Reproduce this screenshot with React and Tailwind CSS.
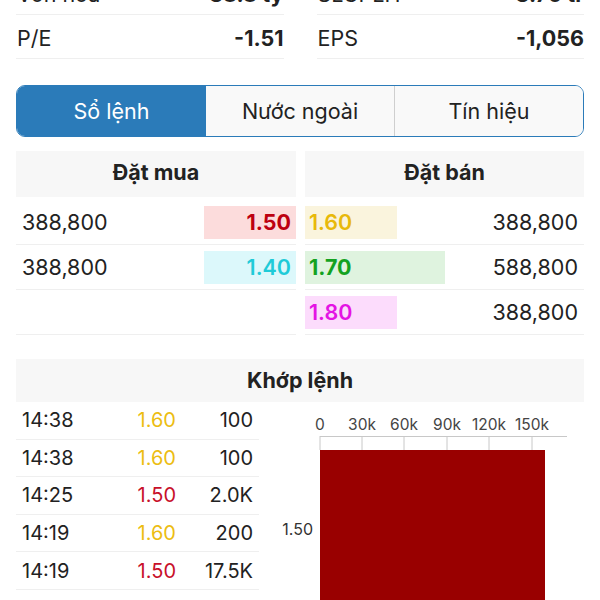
const stats = [
  [
    ['Vốn hóa', '38.8 tỷ'],
    ['SLCPLH', '3.70 tr'],
  ],
  [
    ['P/E', '-1.51'],
    ['EPS', '-1,056'],
  ],
];

const bids = [
  { vol: '388,800', price: '1.50', bg: 'bg-[#fcdcdc]', color: 'text-[#bd0010] font-bold' },
  { vol: '388,800', price: '1.40', bg: 'bg-[#dcf8fb]', color: 'text-[#1fcbd8] font-semibold' },
];

const asks = [
  { vol: '388,800', price: '1.60', w: 'w-[92px]', bg: 'bg-[#faf4dd]', color: 'text-[#e8b90a] font-semibold' },
  { vol: '588,800', price: '1.70', w: 'w-[140px]', bg: 'bg-[#dff3df]', color: 'text-[#13a21f] font-bold' },
  { vol: '388,800', price: '1.80', w: 'w-[92px]', bg: 'bg-[#fcdcfc]', color: 'text-[#e414e4] font-semibold' },
];

const trades = [
  ['14:38', '1.60', '100', 'text-[#ecbd12]'],
  ['14:38', '1.60', '100', 'text-[#ecbd12]'],
  ['14:25', '1.50', '2.0K', 'text-[#c8102a]'],
  ['14:19', '1.60', '200', 'text-[#ecbd12]'],
  ['14:19', '1.50', '17.5K', 'text-[#c8102a]'],
];

const ticks = [
  [61, '0'],
  [103, '30k'],
  [145, '60k'],
  [188, '90k'],
  [230, '120k'],
  [273, '150k'],
];

function VolumeChart() {
  return (
    <svg width="325" height="198" viewBox="0 0 325 198" className="block">
      {ticks.map(([x, t]) => (
        <g key={t}>
          <text x={x} y="28" textAnchor="middle" fontSize="15.5" fill="#444" fontFamily="Inter, sans-serif">
            {t}
          </text>
          <line x1={x} y1="34" x2={x} y2="48" stroke="#c8c8c8" strokeWidth="1" />
        </g>
      ))}
      <line x1="61" y1="34.5" x2="308" y2="34.5" stroke="#c8c8c8" strokeWidth="1" />
      <rect x="61" y="48" width="225" height="160" fill="#990000" />
      <text x="54" y="133" textAnchor="end" fontSize="16" fill="#333" fontFamily="Inter, sans-serif">
        1.50
      </text>
    </svg>
  );
}

export default function App() {
  return (
    <div className="h-[600px] w-[600px] overflow-hidden bg-white px-4 text-[#222] font-['Inter',sans-serif]">
      {/* Chỉ số cơ bản */}
      <div className="-mt-[29px] grid grid-cols-2 gap-x-[33px]">
        {stats.map((row) =>
          row.map(([label, value]) => (
            <div key={label} className="flex h-[44px] items-center justify-between border-b border-[#efefef] pl-[1px] pt-[3px] text-[21.5px]">
              <span>{label}</span>
              <span className="font-bold">{value}</span>
            </div>
          ))
        )}
      </div>

      {/* Tabs */}
      <div className="mt-[26px] flex h-[52px] overflow-hidden rounded-[9px] border border-[#2b7bb9] text-[21.5px]">
        <div className="flex w-[189px] items-center justify-center bg-[#2b7bb9] text-white">Sổ lệnh</div>
        <div className="flex w-[189px] items-center justify-center border-r border-[#cfcfcf] bg-[#f9f9f9]">Nước ngoài</div>
        <div className="flex flex-1 items-center justify-center bg-[#f9f9f9]">Tín hiệu</div>
      </div>

      {/* Sổ lệnh */}
      <div className="mt-[14px] grid grid-cols-[280px_1fr] gap-x-[9px] text-[21.5px]">
        <div>
          <div className="mb-[3px] flex h-[46px] items-center justify-center bg-[#f7f7f7] pb-[3px] font-bold">Đặt mua</div>
          {bids.map((b, i) => (
            <div key={i} className="flex h-[45px] items-center justify-between border-b border-[#efefef] pl-[6px]">
              <span>{b.vol}</span>
              <span className={`flex h-[33px] w-[92px] items-center justify-end pr-[5px] ${b.bg} ${b.color}`}>{b.price}</span>
            </div>
          ))}
          <div className="h-[45px] border-b border-[#efefef]" />
        </div>
        <div>
          <div className="mb-[3px] flex h-[46px] items-center justify-center bg-[#f7f7f7] pb-[3px] font-bold">Đặt bán</div>
          {asks.map((a, i) => (
            <div key={i} className="flex h-[45px] items-center justify-between border-b border-[#efefef] pr-[6px]">
              <span className={`flex h-[33px] items-center pl-[4px] ${a.w} ${a.bg} ${a.color}`}>{a.price}</span>
              <span>{a.vol}</span>
            </div>
          ))}
        </div>
      </div>

      {/* Khớp lệnh */}
      <div className="mt-[24px] flex h-[43px] items-center justify-center bg-[#f7f7f7] text-[21.5px] font-bold">Khớp lệnh</div>
      <div className="flex">
        <div className="w-[243px]">
          {trades.map(([time, price, vol, color], i) => (
            <div key={i} className="flex h-[37.6px] items-center border-b border-[#efefef] pl-[6px] text-[20px]">
              <span className="flex-1">{time}</span>
              <span className={`w-[76px] text-right ${color}`}>{price}</span>
              <span className="w-[83px] pr-[6px] text-right">{vol}</span>
            </div>
          ))}
        </div>
        <VolumeChart />
      </div>
    </div>
  );
}
